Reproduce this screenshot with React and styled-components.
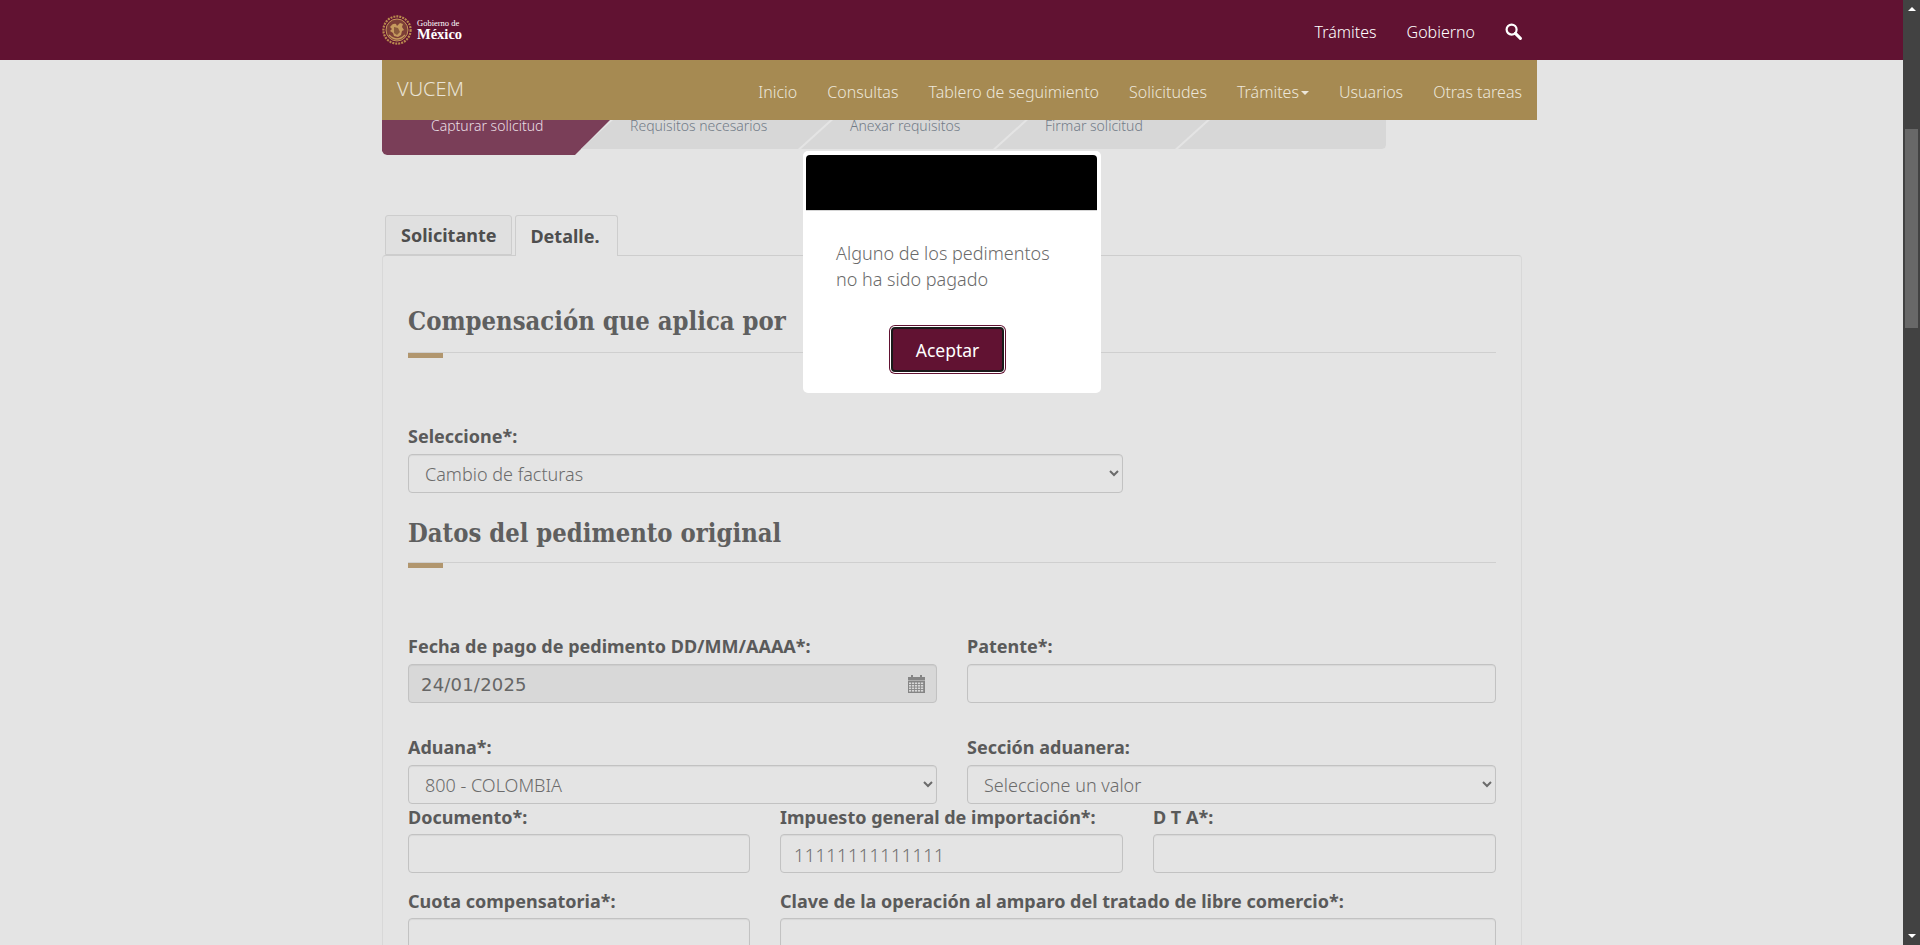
import React from "react";
import styled, { createGlobalStyle } from "styled-components";

const GlobalStyle = createGlobalStyle`
  html, body {
    margin: 0;
    height: 100%;
    overflow: hidden;
    background: #e4e4e4;
  }
  * {
    box-sizing: border-box;
  }
`;

const App = () => {
  return (
    <Screen>
      <GlobalStyle />
      <Page>
        <TopBar>
          <TopInner>
            <Logo>
              <Emblem />
              <LogoText>
                <small>Gobierno de</small>
                <strong>México</strong>
              </LogoText>
            </Logo>
            <TopLinks>
              <TopLink>Trámites</TopLink>
              <TopLink>Gobierno</TopLink>
              <SearchIcon />
            </TopLinks>
          </TopInner>
        </TopBar>

        <NavBar>
          <Brand>VUCEM</Brand>
          <NavLinks>
            <NavLink>Inicio</NavLink>
            <NavLink>Consultas</NavLink>
            <NavLink>Tablero de seguimiento</NavLink>
            <NavLink>Solicitudes</NavLink>
            <NavLink>
              Trámites
              <Caret />
            </NavLink>
            <NavLink>Usuarios</NavLink>
            <NavLink>Otras tareas</NavLink>
          </NavLinks>
        </NavBar>

        <Stepper>
          <Step $active $first $width={228}>Capturar solicitud</Step>
          <Step $width={249}>Requisitos necesarios</Step>
          <Step $width={224}>Anexar requisitos</Step>
          <Step $width={211}>Firmar solicitud</Step>
          <Step $last $width={208} />
        </Stepper>

        <Tabs>
          <Tab>Solicitante</Tab>
          <Tab $active>Detalle.</Tab>
        </Tabs>

        <Panel>
          <Heading>Compensación que aplica por</Heading>
          <Field $width="715px" $top="72px">
            <Label>Seleccione*:</Label>
            <Select defaultValue="Cambio de facturas">
              <option>Cambio de facturas</option>
            </Select>
          </Field>

          <Heading $top="17px" $height="53px">Datos del pedimento original</Heading>

          <TwoCols $top="72px">
            <Field>
              <Label>Fecha de pago de pedimento DD/MM/AAAA*:</Label>
              <DateBox>
                <DateText>24/01/2025</DateText>
                <CalendarIcon />
              </DateBox>
            </Field>
            <Field>
              <Label>Patente*:</Label>
              <Input />
            </Field>
          </TwoCols>

          <TwoCols $top="33px">
            <Field>
              <Label>Aduana*:</Label>
              <Select defaultValue="800 - COLOMBIA">
                <option>800 - COLOMBIA</option>
              </Select>
            </Field>
            <Field>
              <Label>Sección aduanera:</Label>
              <Select defaultValue="Seleccione un valor">
                <option>Seleccione un valor</option>
              </Select>
            </Field>
          </TwoCols>

          <ThreeCols>
            <Field>
              <Label>Documento*:</Label>
              <Input />
            </Field>
            <Field>
              <Label>Impuesto general de importación*:</Label>
              <Input defaultValue="11111111111111" />
            </Field>
            <Field>
              <Label>D T A*:</Label>
              <Input />
            </Field>
            <Field>
              <Label>Cuota compensatoria*:</Label>
              <Input />
            </Field>
            <Field $span={2}>
              <Label>Clave de la operación al amparo del tratado de libre comercio*:</Label>
              <Input />
            </Field>
          </ThreeCols>
        </Panel>
      </Page>

      <Scrollbar>
        <ArrowUp />
        <Thumb />
        <ArrowDown />
      </Scrollbar>

      <Modal>
        <ModalHead />
        <ModalText>
          Alguno de los pedimentos
          <br />
          no ha sido pagado
        </ModalText>
        <ModalFooter>
          <AcceptButton>Aceptar</AcceptButton>
        </ModalFooter>
      </Modal>
    </Screen>
  );
};

export default App;

const Emblem = () => (
  <svg width="30" height="30" viewBox="0 0 30 30">
    <circle cx="15" cy="15" r="13.6" fill="none" stroke="#b98a4e" strokeWidth="2.2" strokeDasharray="2 1" />
    <circle cx="15" cy="15" r="11" fill="#7d3f37" />
    <circle cx="15" cy="15" r="11" fill="none" stroke="#c4965a" strokeWidth="1" />
    <path
      d="M8 12c2-3 4-4 6-3l1 2 3-3 3 1-1 3 2 3-2 1-1 4-3 2-4-1-1-3-3-2 2-2z"
      fill="#c69a5e"
    />
    <path d="M7 20c3 3 5 4 8 4s5-1 8-4" fill="none" stroke="#c69a5e" strokeWidth="1.4" />
    <path d="M12 12l4 1 2 4-3 3-3-2z" fill="#8a5a3c" />
  </svg>
);

const SearchIcon = () => (
  <svg width="17" height="17" viewBox="0 0 17 17">
    <circle cx="6.6" cy="6.6" r="5" fill="none" stroke="#fff" strokeWidth="2.2" />
    <path d="M10.4 10.4l5 5" stroke="#fff" strokeWidth="3" strokeLinecap="round" />
  </svg>
);

const CalendarIcon = () => (
  <CalendarSvg width="17" height="19" viewBox="0 0 17 19">
    <path d="M0 3h3V1h2v2h7V1h2v2h3v3.5H0z" fill="#858585" />
    <rect x="0" y="7" width="17" height="12" fill="#858585" />
    {[8.5, 11, 13.5, 16].map((y) =>
      [1, 4, 7, 10, 13].map((x) => (
        <rect key={`${x}-${y}`} x={x} y={y} width="2.2" height="1.6" fill="#d8d8d8" />
      ))
    )}
  </CalendarSvg>
);

const Screen = styled.div`
  display: flex;
  width: 100%;
  height: 100vh;
  overflow: hidden;
  font-family: "Noto Sans", "Open Sans", sans-serif;
  background: #e4e4e4;
`;

const Page = styled.div`
  flex: 1;
  min-width: 0;
  height: 100%;
  overflow: hidden;
`;

const TopBar = styled.header`
  height: 60px;
  background: #611232;
`;

const TopInner = styled.div`
  width: 1140px;
  height: 100%;
  margin-left: 382px;
  display: flex;
  align-items: center;
  justify-content: space-between;
`;

const Logo = styled.div`
  display: flex;
  align-items: center;
  gap: 5px;
`;

const LogoText = styled.div`
  display: flex;
  flex-direction: column;
  color: #fff;
  font-family: "Liberation Serif", serif;

  small {
    font-size: 8.5px;
    line-height: 9px;
  }

  strong {
    font-size: 14.5px;
    line-height: 13px;
  }
`;

const TopLinks = styled.nav`
  display: flex;
  align-items: center;
  gap: 30px;
  margin-top: 3px;
`;

const TopLink = styled.a`
  color: #fff;
  font-size: 16px;
  font-weight: 300;
`;

const NavBar = styled.nav`
  position: relative;
  z-index: 2;
  width: 1155px;
  height: 60px;
  margin-left: 382px;
  padding: 0 15px;
  display: flex;
  align-items: center;
  justify-content: space-between;
  background: #a68a52;
`;

const Brand = styled.div`
  color: #e9e3d6;
  font-size: 20px;
  font-weight: 300;
  margin-top: -3px;
`;

const NavLinks = styled.div`
  display: flex;
  gap: 30px;
  margin-top: 3px;
`;

const NavLink = styled.a`
  color: #ece6d9;
  font-size: 16px;
  font-weight: 300;
  display: flex;
  align-items: center;
`;

const Caret = styled.span`
  width: 0;
  height: 0;
  margin: 2px 0 0 2px;
  border-top: 4px solid #ece6d9;
  border-left: 4px solid transparent;
  border-right: 4px solid transparent;
`;

const Stepper = styled.div`
  display: flex;
  align-items: flex-start;
  width: 1004px;
  height: 35px;
  margin-left: 382px;
`;

const stepClip = ({ $active, $first, $last }) => {
  if ($first) {
    return "polygon(0 0, 100% 0, calc(100% - 35px) 100%, 5px 100%, 2px calc(100% - 1px), 0 calc(100% - 4px))";
  }
  if ($last) {
    return "polygon(32px 0, 100% 0, 100% calc(100% - 4px), calc(100% - 1px) calc(100% - 1px), calc(100% - 4px) 100%, 0 100%)";
  }
  return $active ? "none" : "polygon(32px 0, 100% 0, calc(100% - 32px) 100%, 0 100%)";
};

const Step = styled.div`
  flex: none;
  width: ${(p) => p.$width}px;
  height: ${(p) => (p.$active ? 35 : 29)}px;
  margin-left: ${(p) => (p.$first ? 0 : -29)}px;
  padding-left: 49px;
  font-size: 14px;
  font-weight: 300;
  line-height: 11px;
  background: ${(p) => (p.$active ? "#7a3e58" : "#d7d7d7")};
  color: ${(p) => (p.$active ? "#eadfe4" : "#727b87")};
  clip-path: ${stepClip};
  white-space: nowrap;
`;

const Tabs = styled.div`
  display: flex;
  gap: 3px;
  width: 1140px;
  height: 41px;
  margin: 60px 0 -1px 382px;
  padding-left: 3px;
  position: relative;
  z-index: 1;
`;

const Tab = styled.div`
  height: ${(p) => (p.$active ? 41 : 40)}px;
  padding: ${(p) => (p.$active ? "0 17px 0 14px" : "0 15px")};
  display: flex;
  align-items: center;
  font-size: 18px;
  font-weight: 700;
  color: #4e4e4e;
  background: ${(p) => (p.$active ? "#e4e4e4" : "#e0e0e0")};
  border: 1px solid #cdcdcd;
  border-bottom: ${(p) => (p.$active ? "none" : "1px solid #cdcdcd")};
  border-radius: 3px 3px 0 0;
`;

const Panel = styled.section`
  width: 1140px;
  margin-left: 382px;
  padding: 42px 25px 40px 25px;
  border: 1px solid #d8d8d8;
  border-top-color: #cdcdcd;
  border-radius: 4px;
`;

const Heading = styled.h2`
  position: relative;
  margin: ${(p) => p.$top || 0} 0 0;
  height: ${(p) => p.$height || "55px"};
  padding-bottom: 0;
  font-family: "DejaVu Serif Condensed", "DejaVu Serif", serif;
  font-size: 25.4px;
  line-height: 47px;
  font-weight: 700;
  color: #5f5f5f;
  border-bottom: 1px solid #cfcfcf;

  &::after {
    content: "";
    position: absolute;
    left: 0;
    bottom: -6px;
    width: 35px;
    height: 5px;
    background: #b1966e;
  }
`;

const Field = styled.div`
  min-width: 0;
  width: ${(p) => p.$width || "auto"};
  margin-top: ${(p) => p.$top || 0};
  grid-column: ${(p) => (p.$span ? `span ${p.$span}` : "auto")};
`;

const Label = styled.label`
  display: block;
  height: 22px;
  margin-bottom: 7px;
  font-size: 18px;
  line-height: 22px;
  font-weight: 700;
  color: #5a5a5a;
`;

const controlBox = `
  display: block;
  width: 100%;
  height: 39px;
  border: 1px solid #c2c2c2;
  border-radius: 4px;
  background: #e4e4e4;
  box-shadow: inset 0 1px 1px rgba(0, 0, 0, 0.06);
  outline: none;
`;

const Select = styled.select`
  ${controlBox}
  padding: 0 0 0 12px;
  font-family: "Noto Sans", sans-serif;
  font-size: 18px;
  font-weight: 300;
  color: #6b6b6b;
`;

const Input = styled.input`
  ${controlBox}
  padding: 2px 13px 0;
  font-family: "Noto Sans", sans-serif;
  font-size: 18px;
  font-weight: 300;
  letter-spacing: 0.5px;
  color: #6b6b6b;
`;

const DateBox = styled.div`
  ${controlBox}
  display: flex;
  align-items: center;
  justify-content: space-between;
  padding: 2px 11px 0 12px;
  background: #d8d8d8;
`;

const DateText = styled.span`
  font-family: "DejaVu Sans", sans-serif;
  font-size: 18px;
  letter-spacing: 0.2px;
  color: #666;
`;

const CalendarSvg = styled.svg`
  flex: none;
  margin-top: -2px;
`;

const TwoCols = styled.div`
  display: grid;
  grid-template-columns: 1fr 1fr;
  column-gap: 30px;
  width: 1088px;
  margin-top: ${(p) => p.$top || 0};
`;

const ThreeCols = styled.div`
  display: grid;
  grid-template-columns: 342px 343px 343px;
  column-gap: 30px;
  row-gap: 17px;
  width: 1088px;
  margin-top: 2px;

  ${Label} {
    margin-bottom: 6px;
  }
`;

const Scrollbar = styled.div`
  position: relative;
  flex: none;
  width: 17px;
  height: 100%;
  padding-top: 129px;
  background: #424242;
`;

const Thumb = styled.div`
  width: 13px;
  height: 199px;
  margin-left: 2px;
  background: #686868;
`;

const ArrowUp = styled.span`
  position: absolute;
  top: 7px;
  left: 5px;
  border-bottom: 4px solid #fff;
  border-left: 4px solid transparent;
  border-right: 4px solid transparent;
`;

const ArrowDown = styled.span`
  position: absolute;
  bottom: 7px;
  left: 5px;
  border-top: 4px solid #fff;
  border-left: 4px solid transparent;
  border-right: 4px solid transparent;
`;

const Modal = styled.div`
  position: fixed;
  z-index: 10;
  left: 803px;
  top: 151px;
  width: 298px;
  height: 242px;
  padding: 4px 4px 0 3px;
  background: #fff;
  border-radius: 5px;
`;

const ModalHead = styled.div`
  height: 56px;
  background: #000;
  border-bottom: 1px solid #d5d5d5;
  border-radius: 4px 4px 0 0;
`;

const ModalText = styled.p`
  margin: 29px 0 0 30px;
  font-size: 18px;
  line-height: 26px;
  font-weight: 300;
  color: #6a6a6a;
`;

const ModalFooter = styled.div`
  display: flex;
  margin: 35px 0 0 85px;
`;

const AcceptButton = styled.button`
  width: 113px;
  height: 45px;
  padding: 0;
  font-family: "Noto Sans", sans-serif;
  font-size: 17.5px;
  font-weight: 400;
  color: #fff;
  background: #611232;
  border: 2px solid #1a1a1a;
  border-radius: 4px;
  box-shadow: 0 0 0 1px #fff, 0 0 0 2px #611232;
`;
